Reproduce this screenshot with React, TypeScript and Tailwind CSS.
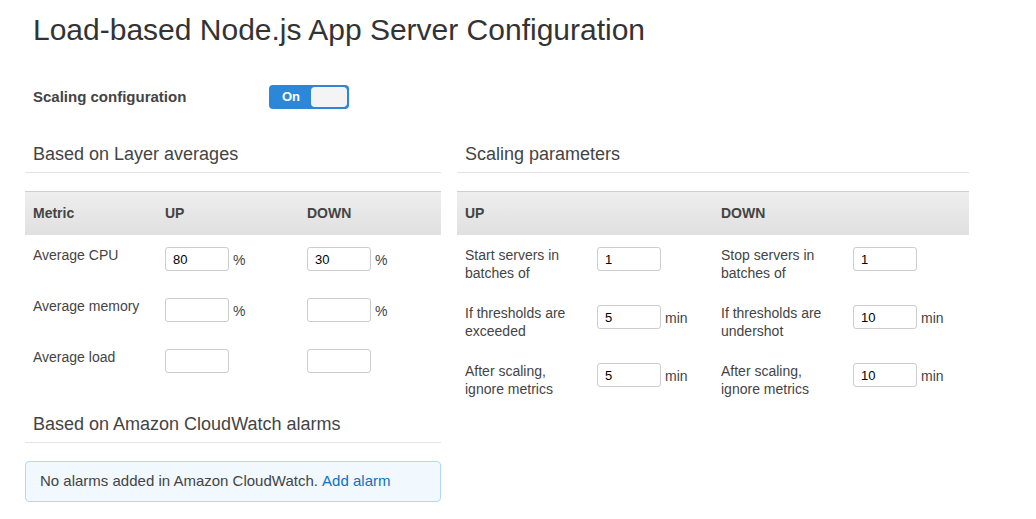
import { useState } from "react";

const font = { fontFamily: '"Liberation Sans", Arial, sans-serif' };

function NumInput({ value }: { value?: string }) {
  return (
    <input
      type="text"
      defaultValue={value}
      className="w-[64px] h-[24px] rounded-[3px] border border-[#ccc] bg-white px-[7px] text-[13px] text-black outline-none"
    />
  );
}

function SectionTitle({ children }: { children: React.ReactNode }) {
  return (
    <h2 className="border-b border-[#e4e4e4] pb-[6px] pl-[8px] text-[18px] leading-[24px] text-[#444]">
      {children}
    </h2>
  );
}

const layerRows = [
  { name: "Average CPU", up: "80", down: "30", pct: true },
  { name: "Average memory", up: "", down: "", pct: true },
  { name: "Average load", up: "", down: "", pct: false },
];

const paramRows = [
  { up: ["Start servers in", "batches of"], upVal: "1", down: ["Stop servers in", "batches of"], downVal: "1", unit: "" },
  { up: ["If thresholds are", "exceeded"], upVal: "5", down: ["If thresholds are", "undershot"], downVal: "10", unit: "min" },
  { up: ["After scaling,", "ignore metrics"], upVal: "5", down: ["After scaling,", "ignore metrics"], downVal: "10", unit: "min" },
];

export default function App() {
  const [on, setOn] = useState(true);

  return (
    <div className="min-h-screen bg-white text-[14px] text-[#444]" style={font}>
      <h1 className="ml-[33px] pt-[12px] text-[30px] leading-[36px] text-[#333]">
        Load-based Node.js App Server Configuration
      </h1>

      <div className="mt-[37px] flex h-[24px] items-center pl-[33px]">
        <span className="w-[236px] text-[15px] font-bold text-[#444]">Scaling configuration</span>
        <button
          type="button"
          onClick={() => setOn(!on)}
          className="flex h-[24px] w-[80px] items-center rounded-[4px] bg-[#2d87d8] p-[2px]"
        >
          <span className="w-[40px] text-center text-[13px] font-bold text-white">On</span>
          <span className="h-[20px] flex-1 rounded-[4px] bg-[#f4f4f4]" />
        </button>
      </div>

      <div className="mt-[33px] flex gap-[16px] pl-[25px]">
        {/* left column */}
        <div className="w-[416px]">
          <SectionTitle>Based on Layer averages</SectionTitle>
          <div className="mt-[18px]">
            <div className="grid h-[44px] grid-cols-[132px_142px_1fr] items-center border-t border-[#cfcfcf] bg-gradient-to-b from-[#eeeeee] to-[#e0e0e0] pl-[8px] font-bold text-[#444]">
              <span>Metric</span>
              <span>UP</span>
              <span>DOWN</span>
            </div>
            {layerRows.map((r) => (
              <div key={r.name} className="grid h-[51px] grid-cols-[132px_142px_1fr] pl-[8px] pt-[10px]">
                <span className="leading-[20px]">{r.name}</span>
                <div className="flex items-start pt-[2px]">
                  <NumInput value={r.up} />
                  {r.pct && <span className="ml-[4px] mt-[3px] leading-[20px]">%</span>}
                </div>
                <div className="flex items-start pt-[2px]">
                  <NumInput value={r.down} />
                  {r.pct && <span className="ml-[4px] mt-[3px] leading-[20px]">%</span>}
                </div>
              </div>
            ))}
          </div>

          <div className="mt-[24px]">
            <SectionTitle>Based on Amazon CloudWatch alarms</SectionTitle>
          </div>
          <div className="mt-[18px] flex h-[41px] items-center rounded-[4px] border border-[#b3d9f5] bg-[#f1f8fe] px-[14px] text-[15px] text-[#444]">
            No alarms added in Amazon CloudWatch.&nbsp;
            <a href="#" className="text-[#0e72c2]">Add alarm</a>
          </div>
        </div>

        {/* right column */}
        <div className="w-[512px]">
          <SectionTitle>Scaling parameters</SectionTitle>
          <div className="mt-[18px]">
            <div className="grid h-[44px] grid-cols-[256px_1fr] items-center border-t border-[#cfcfcf] bg-gradient-to-b from-[#eeeeee] to-[#e0e0e0] pl-[8px] font-bold text-[#444]">
              <span>UP</span>
              <span>DOWN</span>
            </div>
            {paramRows.map((r, i) => (
              <div key={i} className="grid h-[58px] grid-cols-[256px_1fr] pl-[8px] pt-[11px]">
                {[
                  { label: r.up, val: r.upVal },
                  { label: r.down, val: r.downVal },
                ].map((c, j) => (
                  <div key={j} className="flex items-start">
                    <div className="w-[132px] leading-[18px]">
                      {c.label[0]}
                      <br />
                      {c.label[1]}
                    </div>
                    <div className="flex items-start pt-[1px]">
                      <NumInput value={c.val} />
                      {r.unit && <span className="ml-[4px] mt-[3px] leading-[20px]">{r.unit}</span>}
                    </div>
                  </div>
                ))}
              </div>
            ))}
          </div>
        </div>
      </div>
    </div>
  );
}
